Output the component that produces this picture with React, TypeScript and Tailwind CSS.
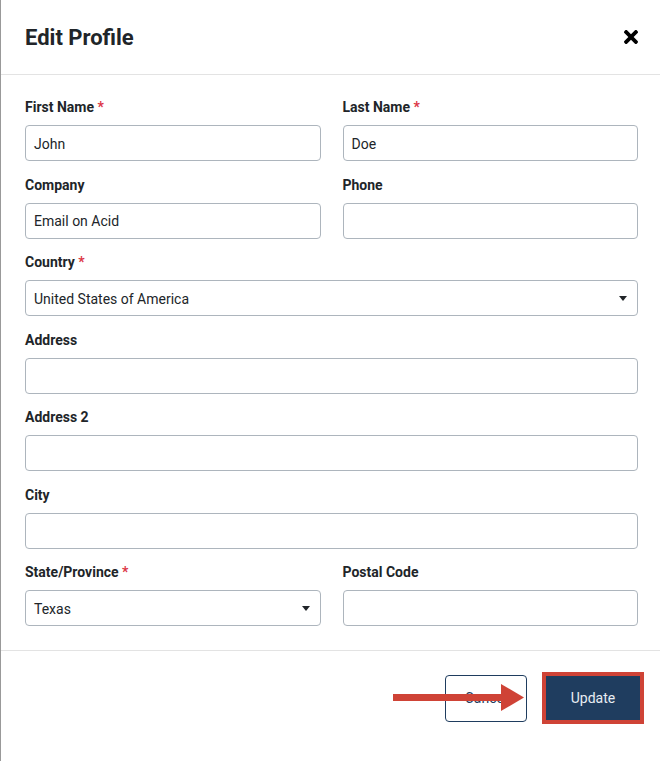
import React from 'react';

// Edit Profile modal

interface FieldProps {
  label: string;
  value?: string;
  required?: boolean;
  select?: boolean;
  wide?: boolean;
}

const Caret = () => (
  <svg width="8" height="5" viewBox="0 0 8 5" className="shrink-0">
    <path d="M0 0h8L4 5z" fill="#212529" />
  </svg>
);

const Field: React.FC<FieldProps> = ({ label, value = '', required, select, wide }) => (
  <div className={wide ? 'col-span-2' : ''}>
    <div className="h-4 mb-[10px] text-[14px] leading-4 font-bold text-[#212529]">
      {label}
      {required && <span className="text-[#dc3545]"> *</span>}
    </div>
    <div className="h-9 flex items-center justify-between border border-[#adb5bd] rounded-[4px] pl-2 pr-[10px] bg-white">
      <span className="text-[14px] text-[#212529] translate-y-[1px]">{value}</span>
      {select && <Caret />}
    </div>
  </div>
);

export default function App() {
  return (
    <div className="relative w-[660px] h-[761px] bg-white border-l border-[#999999] font-['Roboto',sans-serif] overflow-hidden">
      {/* Header */}
      <div className="h-[75px] flex items-center justify-between pl-6 pr-[22px] border-b border-[#e3e3e3]">
        <h2 className="text-[22px] font-bold text-[#212529]">Edit Profile</h2>
        <button className="-mt-[1px]">
          <svg width="14" height="14" viewBox="0 80 352 352">
            <path
              fill="#000"
              d="M242.72 256l100.07-100.07c12.28-12.28 12.28-32.19 0-44.48l-22.24-22.24c-12.28-12.28-32.19-12.28-44.48 0L176 189.28 75.93 89.21c-12.28-12.28-32.19-12.28-44.48 0L9.21 111.45c-12.28 12.28-12.28 32.19 0 44.48L109.28 256 9.21 356.07c-12.28 12.28-12.28 32.19 0 44.48l22.24 22.24c12.28 12.28 32.2 12.28 44.48 0L176 322.72l100.07 100.07c12.28 12.28 32.2 12.28 44.48 0l22.24-22.24c12.28-12.28 12.28-32.19 0-44.48L242.72 256z"
            />
          </svg>
        </button>
      </div>

      {/* Body */}
      <div className="grid grid-cols-2 gap-x-[22px] gap-y-[15.5px] pt-6 pb-6 pl-6 pr-[22px] border-b border-[#e3e3e3]">
        <Field label="First Name" value="John" required />
        <Field label="Last Name" value="Doe" required />
        <Field label="Company" value="Email on Acid" />
        <Field label="Phone" />
        <Field label="Country" value="United States of America" required select wide />
        <Field label="Address" wide />
        <Field label="Address 2" wide />
        <Field label="City" wide />
        <Field label="State/Province" value="Texas" required select />
        <Field label="Postal Code" />
      </div>

      {/* Footer */}
      <div className="flex items-center justify-end gap-[15px] pt-[21px] pr-4">
        <button className="w-[82px] h-[47px] border border-[#1f3d5f] rounded-[4px] text-[14px] text-[#1f3d5f] bg-white">
          Cancel
        </button>
        <div className="border-4 border-[#cf4336]">
          <button className="w-[94px] h-[44px] bg-[#1f3d5f] text-[14px] text-[#e8edf3]">Update</button>
        </div>
      </div>

      {/* annotation arrow */}
      <svg className="absolute left-[392px] top-[684px]" width="132" height="27" viewBox="0 0 132 27">
        <rect x="0" y="10" width="112" height="7" fill="#cf4336" />
        <path d="M108 0L131 13.5L108 27z" fill="#cf4336" />
      </svg>
    </div>
  );
}
